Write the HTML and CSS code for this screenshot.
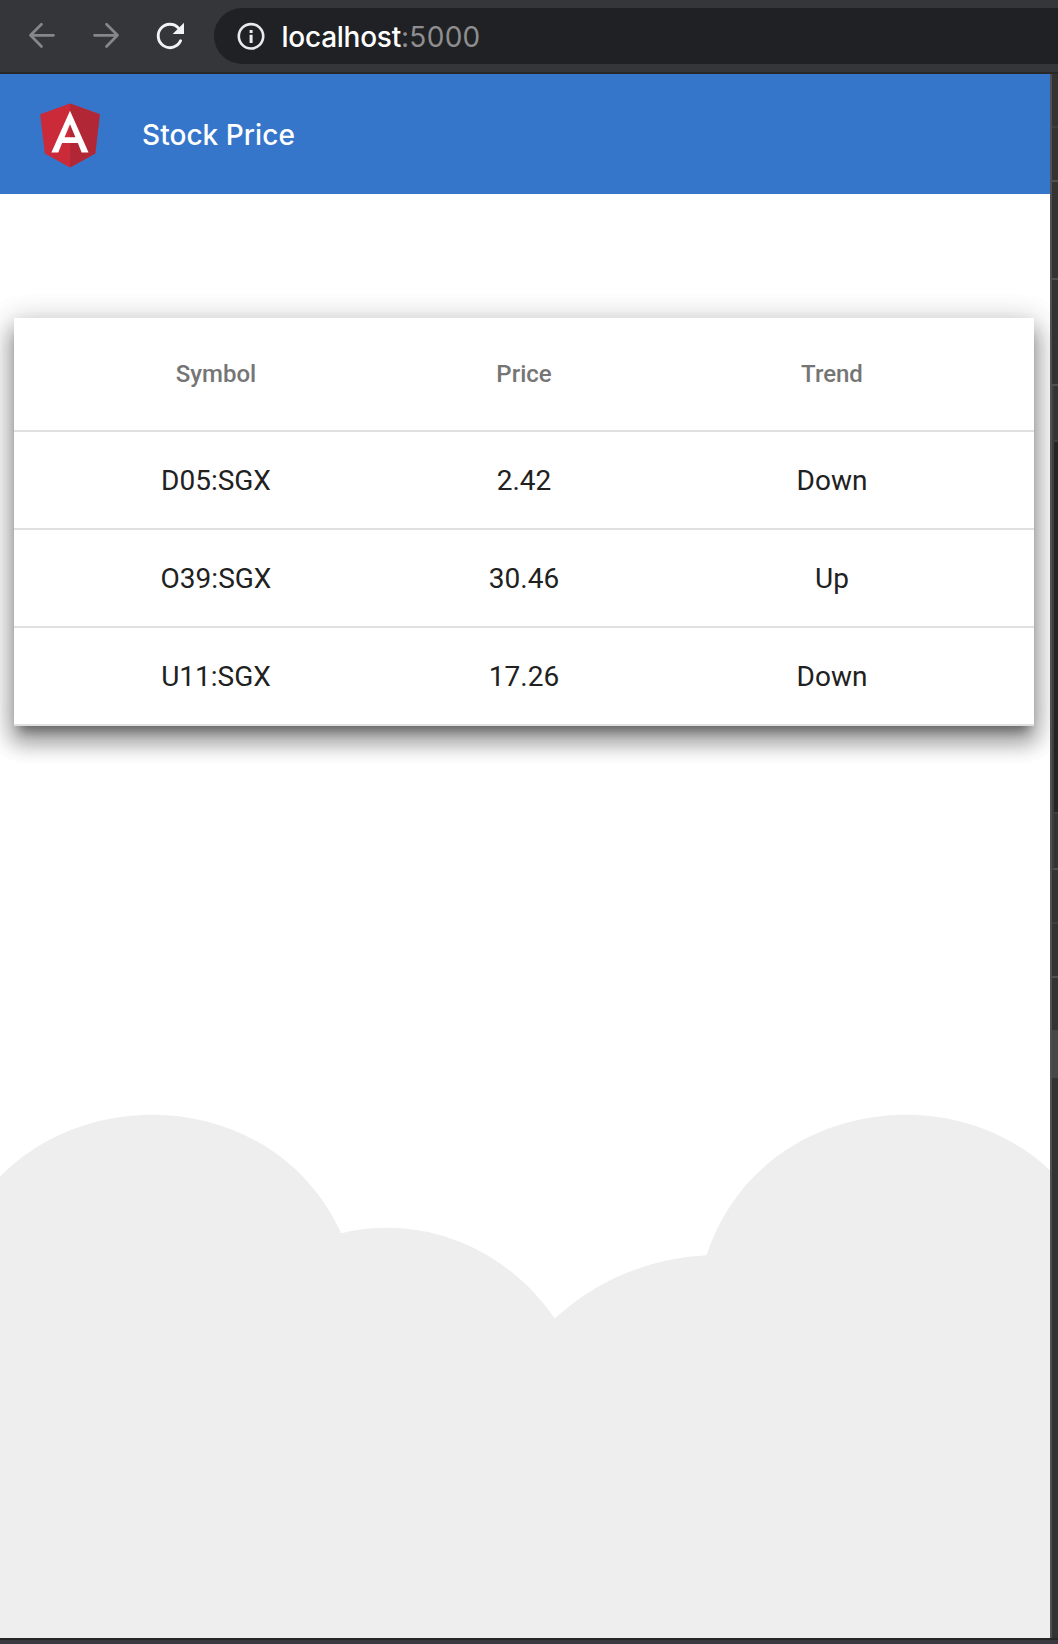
FILE: index.html
```html
<!DOCTYPE html>
<html lang="en">
<head>
<meta charset="utf-8">
<title>Stock Price</title>
<link rel="stylesheet" href="styles.css">
</head>
<body>
<div class="browser">
  <div class="nav">
    <svg class="nav-icons" width="214" height="72" viewBox="0 0 214 72" fill="none">
      <g stroke="#87878a" stroke-width="2.7" stroke-linecap="round" stroke-linejoin="round">
        <path d="M53.5 35.3H31M41.5 24.3L30.5 35.3l11 11.2"/>
        <path d="M94.5 35.3H117M106.5 24.3l11 11-11 11.2"/>
      </g>
      <path d="M180.6 40.7A11.7 11.7 0 1 1 178.6 28.1" stroke="#f1f3f4" stroke-width="2.9" stroke-linecap="round"/>
      <path d="M184 22.7V34H172.7z" fill="#f1f3f4"/>
    </svg>
    <div class="address">
      <svg class="info" width="28" height="28" viewBox="0 0 28 28">
        <circle cx="14" cy="14.3" r="12.2" fill="none" stroke="#e8eaed" stroke-width="2.6"/>
        <path d="M12.6 8h3v3h-3zM12.6 12.7h3v8.3h-3z" fill="#e8eaed"/>
      </svg>
      <span class="url">localhost<span class="port">:5000</span></span>
    </div>
  </div>
  <div class="content">
    <main class="page">
      <header class="toolbar">
        <svg class="logo" width="80" height="80" viewBox="0 0 250 250">
          <path fill="#cb2b39" d="M125 30L31.9 63.2l14.2 123.1L125 230l78.9-43.7 14.2-123.1z"/>
          <path fill="#b22736" d="M125 30v200l78.9-43.7 14.2-123.1z"/>
          <path fill="#fff" d="M125 52.1L66.8 182.6h21.7l11.7-29.2h49.4l11.7 29.2H183L125 52.1zm17 83.3h-34l17-40.9z"/>
        </svg>
        <span class="title">Stock Price</span>
      </header>
      <div class="card">
        <table class="stocks">
          <thead><tr><th>Symbol</th><th>Price</th><th>Trend</th></tr></thead>
          <tbody>
            <tr><td>D05:SGX</td><td>2.42</td><td>Down</td></tr>
            <tr><td>O39:SGX</td><td>30.46</td><td>Up</td></tr>
            <tr><td>U11:SGX</td><td>17.26</td><td>Down</td></tr>
          </tbody>
        </table>
      </div>
      <svg class="clouds" width="1050" height="538" viewBox="0 1100 1050 538">
        <path fill="#eee" transform="translate(706.5 1255.3) scale(1.471)" d="M264-15c-52-114-225-105-264 15a162.027 162.027 0 0 0-103.147 43.044c-30.633-45.365-87.1-72.091-145.206-58.044-52-114-225-105-264 15V300H264z"/>
      </svg>
    </main>
    <aside class="panel">
      <div class="row h52 faint"></div>
      <div class="row h52"></div>
      <div class="row h96"></div>
      <div class="row h104"></div>
      <div class="row inset h54 faint"></div>
      <div class="row inset dark h370 faint"></div>
      <div class="row inset h54"></div>
      <div class="row h52 faint"></div>
      <div class="row h52"></div>
      <div class="row h52 plain"></div>
      <div class="row h48 light"></div>
    </aside>
  </div>
  <div class="shelf"></div>
</div>
</body>
</html>
```
FILE: styles.css
```css
* { box-sizing: border-box; }
body { margin: 0; background: #38383e; }
svg { display: block; flex: none; }

.browser {
  width: 1058px;
  height: 1644px;
  display: flex;
  flex-direction: column;
  overflow: hidden;
}

.nav {
  flex: none;
  height: 74px;
  display: flex;
  background: #35363a;
  border-bottom: 2px solid #282828;
}
.address {
  flex: 1;
  height: 56px;
  margin-top: 8px;
  padding-left: 22.5px;
  display: flex;
  align-items: center;
  gap: 17px;
  background: #202124;
  border-radius: 28px 0 0 28px;
}
.url {
  padding-top: 1px;
  color: #fff;
  font: 500 28px/56px Inter, sans-serif;
  letter-spacing: -0.25px;
}
.port {
  color: #8e8e90;
  font-weight: 400;
  letter-spacing: 0.3px;
}

.content {
  flex: none;
  height: 1564px;
  display: flex;
}
.page {
  width: 1050px;
  display: flex;
  flex-direction: column;
  background: #fff;
  overflow: hidden;
}
.toolbar {
  flex: none;
  height: 120px;
  padding-left: 30px;
  display: flex;
  align-items: center;
  gap: 32px;
  background: #3576cb;
}
.title {
  padding-top: 1px;
  color: #fff;
  font: 550 28px/40px Inter, sans-serif;
  letter-spacing: 0.05px;
}

.card, .stocks {
  box-shadow:
    0 10px 10px -6px rgba(0, 0, 0, .2),
    0 16px 20px 2px rgba(0, 0, 0, .14),
    0 6px 28px 4px rgba(0, 0, 0, .12);
}
.card { margin: 124px 16px 0 14px; }
.stocks {
  width: 100%;
  table-layout: fixed;
  border-collapse: separate;
  border-spacing: 0;
  padding: 0;
  background: #fff;
  font-family: Roboto, sans-serif;
  text-align: center;
}
.stocks th, .stocks td {
  padding: 0;
  border-bottom: 2px solid #e0e0e0;
}
.stocks th {
  height: 114px;
  font-size: 24px;
  font-weight: 500;
  color: #757575;
}
.stocks td {
  height: 98px;
  font-size: 28px;
  color: #212121;
}
.stocks th:first-child, .stocks td:first-child { width: 356px; padding-left: 48px; }
.stocks th:last-child, .stocks td:last-child { width: 356px; padding-right: 48px; }

.clouds { margin-top: auto; }

.panel {
  width: 8px;
  display: flex;
  flex-direction: column;
  background: #333;
  border-left: 2px solid #505050;
}
.row {
  flex: none;
  box-sizing: content-box;
  border-bottom: 2px solid #505050;
}
.faint { border-bottom-color: #3d3d3d; }
.inset { border-left: 2px solid #3d3d3d; }
.dark { background: #242424; }
.plain { border-bottom: 0; }
.light { background: #474747; border-bottom: 0; }
.h48 { height: 48px; }
.h52 { height: 52px; }
.h54 { height: 54px; }
.h96 { height: 96px; }
.h104 { height: 104px; }
.h370 { height: 370px; }

.shelf {
  flex: none;
  height: 6px;
  background: #38383e;
  border-top: 2px solid #262828;
}
```
